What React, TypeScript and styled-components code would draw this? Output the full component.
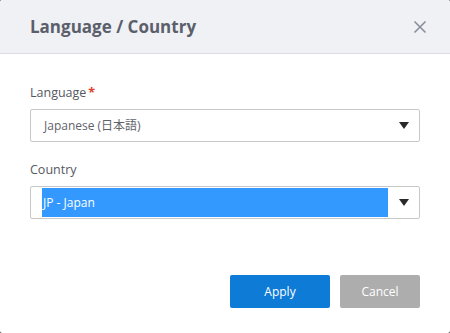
import { createGlobalStyle, styled } from "styled-components";

const GlobalStyle = createGlobalStyle`
  html, body {
    margin: 0;
    padding: 0;
    background: #2b2b2b;
  }
  body {
    font-family: "Open Sans", "Noto Sans CJK JP", sans-serif;
  }
`;

const Dialog = styled.div`
  width: 450px;
  height: 333px;
  background: #fff;
  border-radius: 2px;
  overflow: hidden;
  display: flex;
  flex-direction: column;
`;

const Header = styled.div`
  height: 54px;
  box-sizing: border-box;
  background: #f0f1f5;
  border-bottom: 1px solid #dcdde2;
  display: flex;
  align-items: center;
  justify-content: space-between;
  padding: 0 20px 0 30px;
`;

const Title = styled.h2`
  margin: 0;
  font-size: 17px;
  font-weight: 700;
  color: #5b5f6b;
`;

const CloseButton = styled.button`
  background: none;
  border: none;
  padding: 0;
  width: 20px;
  height: 20px;
  display: flex;
  align-items: center;
  justify-content: center;
  cursor: pointer;
`;

const Body = styled.div`
  padding: 30px 30px 0;
  display: flex;
  flex-direction: column;
  gap: 19px;
  flex: 1;
`;

const Field = styled.div`
  display: flex;
  flex-direction: column;
  gap: 8px;
`;

const Label = styled.label`
  font-size: 12.5px;
  color: #55585f;
  line-height: 17px;
`;

const Required = styled.span`
  color: #e0402b;
  font-weight: 700;
  margin-left: 2px;
`;

const Select = styled.div`
  height: 33px;
  box-sizing: border-box;
  border: 1px solid #c8c8c8;
  border-radius: 2px;
  display: flex;
  align-items: center;
  padding: 0 10px 0 11px;
  background: #fff;
`;

const Value = styled.span<{ $selected?: boolean }>`
  flex: ${(p) => (p.$selected ? "0 0 346px" : "1")};
  height: 29px;
  line-height: 29px;
  font-size: 12px;
  padding-left: ${(p) => (p.$selected ? "1px" : "2px")};
  box-sizing: border-box;
  color: ${(p) => (p.$selected ? "#fff" : "#5f6269")};
  background: ${(p) => (p.$selected ? "#3399ff" : "transparent")};
`;

const Arrow = styled.span`
  margin-left: auto;
  width: 0;
  height: 0;
  border-left: 5px solid transparent;
  border-right: 5px solid transparent;
  border-top: 7px solid #2a2a2a;
`;

const Footer = styled.div`
  display: flex;
  justify-content: flex-end;
  gap: 10px;
  padding: 0 30px 25px;
`;

const Button = styled.button<{ $primary?: boolean }>`
  height: 33px;
  width: ${(p) => (p.$primary ? "100px" : "80px")};
  border: none;
  border-radius: 2px;
  font-family: inherit;
  font-size: 12px;
  color: #fff;
  background: ${(p) => (p.$primary ? "#0e7bd6" : "#adadad")};
  cursor: pointer;
`;

export default function App() {
  return (
    <>
      <GlobalStyle />
      <Dialog>
        <Header>
          <Title>Language / Country</Title>
          <CloseButton aria-label="Close">
            <svg width="14" height="14" viewBox="0 0 14 14">
              <path d="M1.5 1.5 L12.5 12.5 M12.5 1.5 L1.5 12.5" stroke="#8a8e9c" strokeWidth="1.6" />
            </svg>
          </CloseButton>
        </Header>
        <Body>
          <Field>
            <Label>
              Language<Required>*</Required>
            </Label>
            <Select>
              <Value>Japanese (日本語)</Value>
              <Arrow />
            </Select>
          </Field>
          <Field>
            <Label>Country</Label>
            <Select>
              <Value $selected>JP - Japan</Value>
              <Arrow />
            </Select>
          </Field>
        </Body>
        <Footer>
          <Button $primary>Apply</Button>
          <Button>Cancel</Button>
        </Footer>
      </Dialog>
    </>
  );
}
